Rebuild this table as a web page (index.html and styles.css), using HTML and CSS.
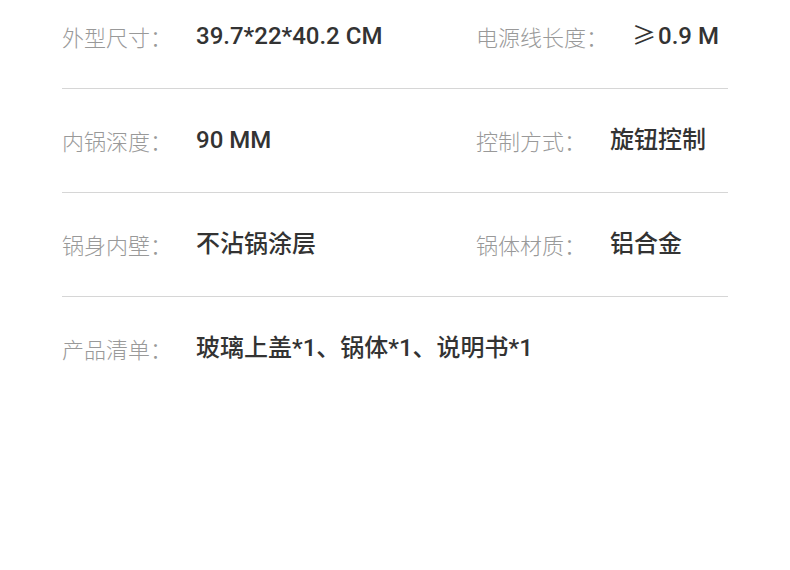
FILE: index.html
```html
<!DOCTYPE html>
<html lang="zh">

<head>
    <meta charset="UTF-8">
    <meta name="viewport" content="width=device-width, initial-scale=1.0">
    <title>产品参数</title>
    <link rel="stylesheet" href="styles.css">
</head>

<body>

    <div class="specs">
        <div class="spec-row">
            <div class="spec"><span class="label">外型尺寸：</span><span class="value">39.7*22*40.2 CM</span></div>
            <div class="spec"><span class="label">电源线长度：</span><span class="value"><span class="sym">≥</span>0.9 M</span></div>
        </div>
        <div class="spec-row">
            <div class="spec"><span class="label">内锅深度：</span><span class="value">90 MM</span></div>
            <div class="spec"><span class="label">控制方式：</span><span class="value">旋钮控制</span></div>
        </div>
        <div class="spec-row">
            <div class="spec"><span class="label">锅身内壁：</span><span class="value">不沾锅涂层</span></div>
            <div class="spec"><span class="label">锅体材质：</span><span class="value">铝合金</span></div>
        </div>
        <div class="spec-row last">
            <div class="spec"><span class="label">产品清单：</span><span class="value">玻璃上盖*1、锅体*1、说明书*1</span></div>
        </div>
    </div>

</body>

</html>
```

FILE: styles.css
```css
body {
    margin: 0;
    background: #fff;
    font-family: "Noto Sans CJK SC", "Noto Sans", sans-serif;
}

.specs {
    margin: 0 62px;
}

.spec-row {
    display: grid;
    grid-template-columns: 414px 1fr;
    height: 30px;
    padding: 36px 0 37px;
    border-bottom: 1px solid #d6d6d6;
    line-height: 30px;
}

.spec-row:first-child {
    padding-top: 21px;
}

.spec-row.last {
    border-bottom: none;
}

.spec {
    display: flex;
    align-items: center;
    white-space: nowrap;
}

.label {
    font-size: 22px;
    font-weight: 300;
    color: #999;
    margin-right: 24px;
}

.value {
    font-family: Roboto, "Noto Sans CJK SC", sans-serif;
    font-size: 24px;
    font-weight: 500;
    color: #333;
}

.sym {
    font-family: "Noto Sans CJK SC", sans-serif;
    font-weight: 400;
    line-height: 1;
    margin-right: 2px;
}
```
